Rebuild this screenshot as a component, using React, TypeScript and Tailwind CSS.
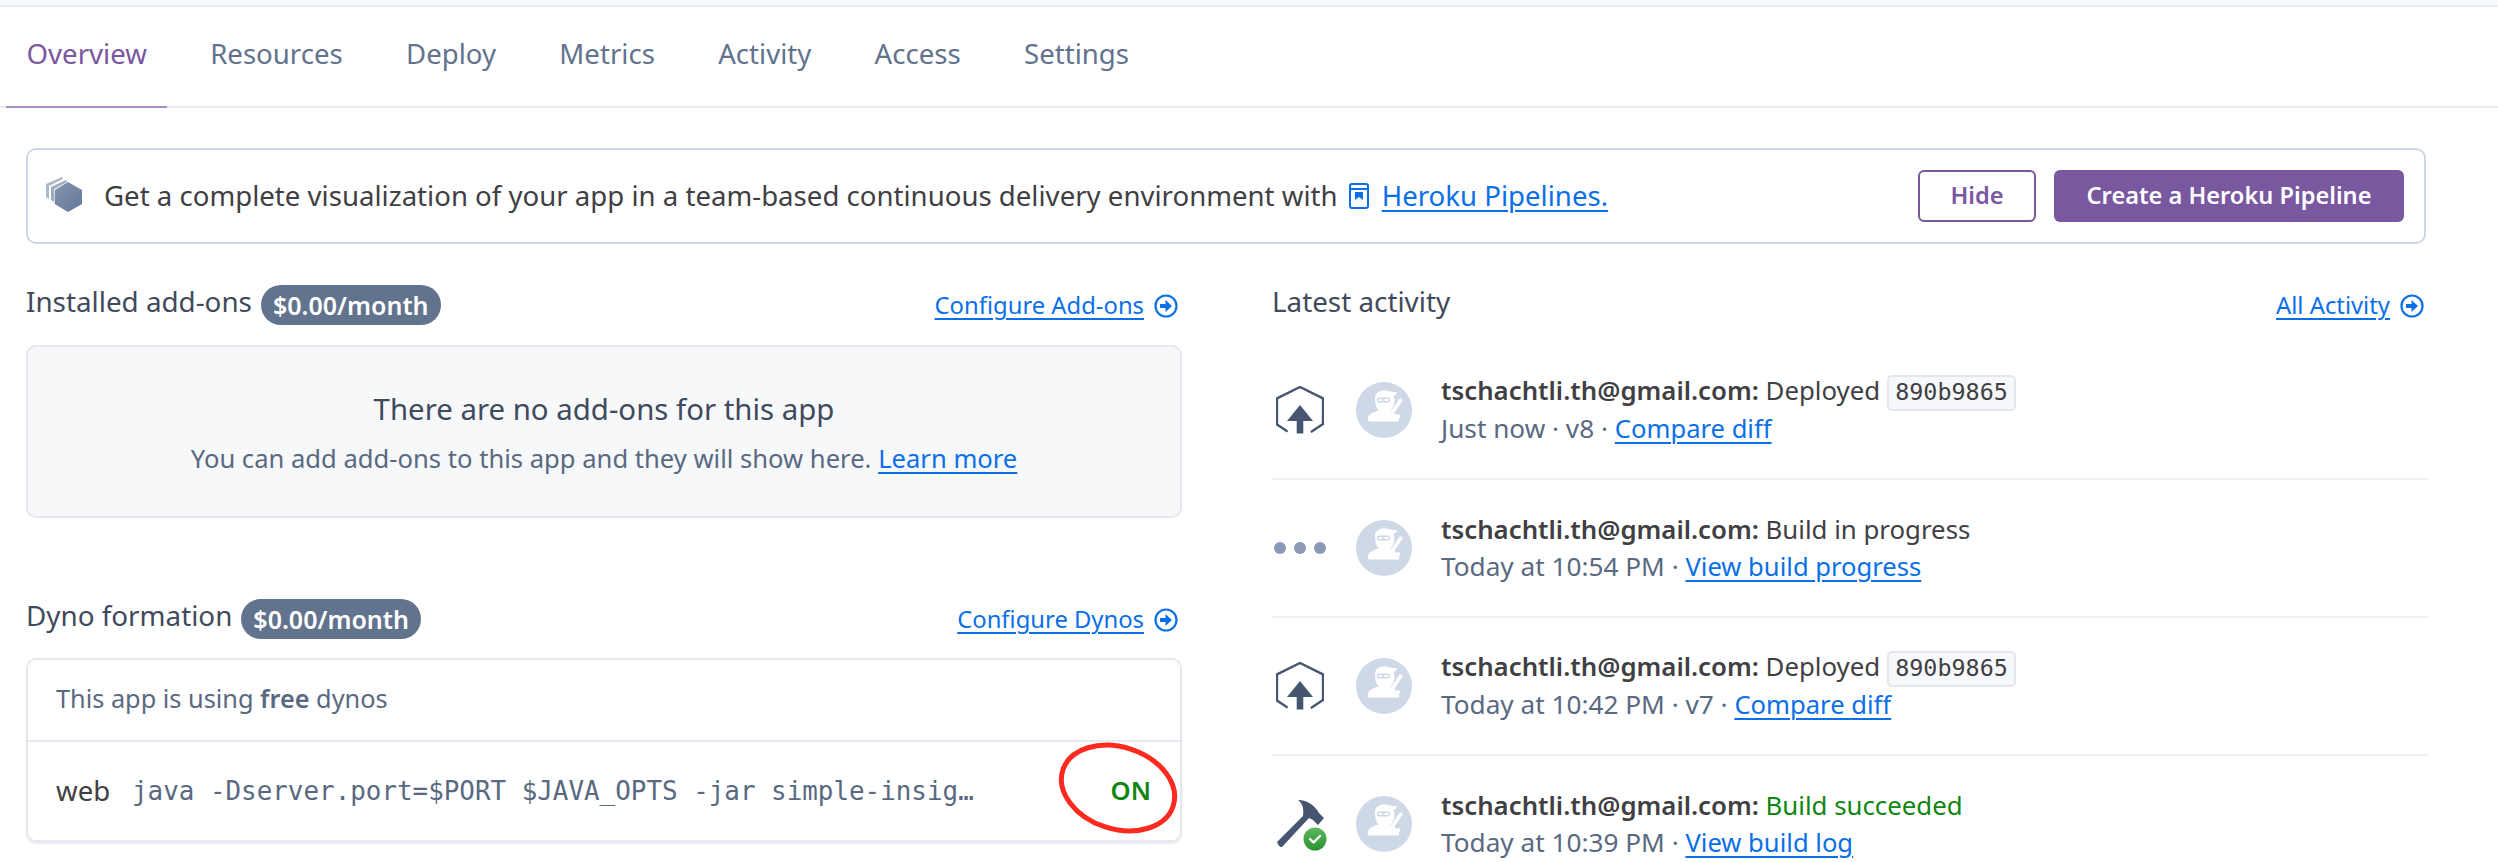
const tabs = ["Overview", "Resources", "Deploy", "Metrics", "Activity", "Access", "Settings"];

const sans = "font-['Noto_Sans','Open_Sans',sans-serif]";
const mono = "font-['DejaVu_Sans_Mono',monospace]";
const link = "text-[#0b6fe8] underline decoration-2 underline-offset-[4px]";

function ArrowCircle() {
  return (
    <svg viewBox="0 0 24 24" className="h-[24px] w-[24px] shrink-0" fill="none">
      <circle cx="12" cy="12" r="10.5" stroke="#0b6fe8" strokeWidth="2.2" />
      <path d="M6 10h5.500V6l6.500 6-6.500 6v-4H6z" fill="#0b6fe8" />
    </svg>
  );
}

function Ninja() {
  return (
    <svg viewBox="0 0 56 56" className="h-[56px] w-[56px] shrink-0">
      <circle cx="28" cy="28" r="28" fill="#cfd8e7" />
      <path d="M19 16c0-5 4-7.500 9-7.500 3 0 6 .5 8 1.500l5 0-1 3-2.500.5c1.500 3 1.500 8-.5 11.500-1 2-2 3.500-3 4.500 3 .5 5 1.500 6 3l4 0v3l-1 .5c0 1.500 0 3-.5 3.500H13c-1.500 0-1.500-2-1-3.500 1-4 5-6 10.500-7.500-2.500-3-3.500-7-3.500-12.500z" fill="#fff" />
      <path d="M34.500 30 44 16l3 2-9.500 14z" fill="#fff" />
      <rect x="21" y="15.500" width="13" height="5" rx="2" fill="#cfd8e7" />
      <rect x="22.500" y="17" width="4" height="2" fill="#fff" />
      <rect x="28.500" y="17" width="4" height="2" fill="#fff" />
    </svg>
  );
}

function DeployIcon() {
  return (
    <svg viewBox="0 0 48 48" className="ml-[2px] h-[48px] w-[48px]" fill="none">
      <path d="M10.700 45 1 38.500V12.300L24 1l23 11.300v25.700L35.700 45.500" stroke="#475670" strokeWidth="2.400" strokeLinecap="round" strokeLinejoin="round" />
      <path d="M24 19 37 35H27.300v12.500h-6.600V35H11z" fill="#475670" />
    </svg>
  );
}

function DotsIcon() {
  return (
    <svg viewBox="0 0 52 14" className="h-[14px] w-[52px]">
      <circle cx="6" cy="7" r="6" fill="#8b9ab5" />
      <circle cx="26" cy="7" r="6" fill="#8b9ab5" />
      <circle cx="46" cy="7" r="6" fill="#8b9ab5" />
    </svg>
  );
}

function BuildIcon() {
  return (
    <svg viewBox="0 0 52 54" className="ml-[2px] mt-[2px] h-[54px] w-[52px]">
      <defs>
        <linearGradient id="ok" x1="0" y1="0" x2="0" y2="1">
          <stop offset="0" stopColor="#5cb85c" />
          <stop offset="1" stopColor="#2a9232" />
        </linearGradient>
      </defs>
      <path d="M22 2c10 0 17 6 21 13l5 5-6 7-5-5-4-2L6 49c-2 .5-4-2-5-5l26-26c1-7 0-12-5-16z" fill="#475670" />
      <circle cx="39" cy="41" r="11.500" fill="url(#ok)" />
      <path d="m34 41 3.500 3.500 6.500-6.500" stroke="#fff" strokeWidth="2.400" fill="none" strokeLinecap="round" strokeLinejoin="round" />
    </svg>
  );
}

function Sha() {
  return (
    <code className={`${mono} ml-[7px] inline-block h-[36px] rounded-[5px] border-2 border-[#e3e6ec] bg-[#f7f8fb] px-[6px] align-middle text-[23.4px] leading-[31px] text-[#3f3f44]`}>
      890b9865
    </code>
  );
}

function ActivityRow({ icon, title, meta, action }: { icon: React.ReactNode; title: React.ReactNode; meta: string; action: string }) {
  return (
    <div className="flex h-[138px] items-center border-b-2 border-[#eef1f6]">
      <div className="flex w-[84px] shrink-0 items-center pl-[2px]">{icon}</div>
      <Ninja />
      <div className="ml-[29px] text-[25.8px]">
        <div className="flex h-[38px] items-center whitespace-nowrap text-[#3f3f44]">
          <span>
            <b className="font-semibold">tschachtli.th@gmail.com:</b> {title}
          </span>
        </div>
        <div className="flex h-[38px] items-center whitespace-pre text-[26.2px] text-[#596981]">
          {meta} <a className={`${link} text-[25.6px]`}>{action}</a>
        </div>
      </div>
    </div>
  );
}

function Heading({ title, price, action }: { title: string; price?: string; action: string }) {
  return (
    <div className="flex h-[40px] items-center justify-between">
      <div className="flex items-center gap-[9px]">
        <span className="pb-[6px] text-[27.8px] text-[#3f4a5c]">{title}</span>
        {price && <span className="rounded-full bg-[#62738d] px-[12px] text-[25px] leading-[40px] font-semibold text-white">{price}</span>}
      </div>
      <div className="flex items-center gap-[10px] pr-[4px] pt-[2px] text-[23.8px]">
        <a className={link}>{action}</a>
        <ArrowCircle />
      </div>
    </div>
  );
}

export default function App() {
  return (
    <div className={`${sans} relative h-[862px] w-[2498px] overflow-hidden bg-white text-[26px]`}>
      <div className="h-[7px] border-b-2 border-[#e9edf5] bg-[#f7f8fc]" />

      <nav className="flex h-[101px] gap-[22.300px] border-b-2 border-[#e9ebf3] pl-[6px]">
        {tabs.map((tab, i) => (
          <div
            key={tab}
            className={`-mb-[2px] flex w-fit items-center px-[20.500px] pb-[6px] text-[27.6px] ${
              i === 0 ? "border-b-2 border-[#a98fc4] text-[#79589f]" : "border-b-2 border-transparent text-[#62738d]"
            }`}
          >
            {tab}
          </div>
        ))}
      </nav>

      <div className="px-[26px] pr-[70px]">
        <div className="mr-[2px] mt-[40px] flex h-[96px] items-center rounded-[10px] border-2 border-[#cfd7e6] pl-[18px] pr-[20px] text-[27.6px]">
          <svg viewBox="0 0 36 35" className="mb-[4px] h-[35px] w-[36px] shrink-0">
            <defs>
              <linearGradient id="hex" x1="0" y1="0" x2="1" y2="1">
                <stop offset="0" stopColor="#8494ae" />
                <stop offset="1" stopColor="#64789a" />
              </linearGradient>
            </defs>
            <path d="M0 7 16 0l1 2L3 9v13l-3-2z" fill="#aeb9cb" />
            <path d="M5 10 20 3l1 2L8 12v13l-3-2z" fill="#9dabc1" />
            <path d="M22 5l14 8v14l-14 8-13.300-8V13z" fill="url(#hex)" />
          </svg>
          <span className="ml-[22px] whitespace-pre text-[#3f3f44]">
            Get a complete visualization of your app in a team-based continuous delivery environment with{" "}
          </span>
          <svg viewBox="0 0 20 26" className="ml-[3px] h-[26px] w-[22px] shrink-0" fill="none">
            <rect x="1" y="1" width="18" height="24" rx="2" stroke="#0b6fe8" strokeWidth="2" />
            <path d="M1 6h18" stroke="#0b6fe8" strokeWidth="2" />
            <path d="M6 9h8v8l-4-3-4 3z" fill="#0b6fe8" />
          </svg>
          <a className={`${link} ml-[12px]`}>Heroku Pipelines.</a>
          <button className="ml-auto h-[52px] w-[118px] rounded-[6px] border-2 border-[#79589f] text-[23.6px] font-semibold text-[#79589f]">Hide</button>
          <button className="ml-[18px] h-[52px] w-[350px] rounded-[6px] bg-[#79589f] text-[23.6px] font-semibold text-white">Create a Heroku Pipeline</button>
        </div>

        <div className="mt-[41px] grid grid-cols-[1156px_1156px] gap-x-[90px]">
          <div>
            <Heading title="Installed add-ons" price="$0.00/month" action="Configure Add-ons" />
            <div className="mt-[20px] flex h-[173px] flex-col items-center justify-center rounded-[10px] border-2 border-[#e6e8ed] bg-[#f7f8fa] pt-[5px] text-center">
              <div className="text-[29.4px] leading-[46px] text-[#3f4a5c]">There are no add-ons for this app</div>
              <div className="pt-[4px] text-[25.6px] leading-[46px] text-[#596981]">
                You can add add-ons to this app and they will show here. <a className={link}>Learn more</a>
              </div>
            </div>

            <div className="mt-[81px]">
              <Heading title="Dyno formation" price="$0.00/month" action="Configure Dynos" />
            </div>
            <div className="mt-[19px] rounded-[10px] border-2 border-[#e6e8ed] shadow-[0_2px_2px_rgba(80,100,130,0.12)]">
              <div className="flex h-[82px] items-center border-b-2 border-[#e6e9f1] pb-[2px] pl-[28px] text-[25.3px] text-[#596981]">
                <span>
                  This app is using <b className="font-semibold">free</b> dynos
                </span>
              </div>
              <div className="flex h-[98px] items-center pl-[28px] pr-[29px]">
                <span className="w-[76px] text-[27.6px] text-[#3f3f44]">web</span>
                <span className={`${mono} whitespace-pre text-[25.9px] text-[#596981]`}>java -Dserver.port=$PORT $JAVA_OPTS -jar simple-insig…</span>
                <span className="ml-auto text-[25.6px] font-semibold text-[#0f860f]">ON</span>
              </div>
            </div>
          </div>

          <div>
            <Heading title="Latest activity" action="All Activity" />
            <div className="mt-[17px]">
              <ActivityRow icon={<DeployIcon />} title={<>Deployed<Sha /></>} meta="Just now · v8 ·" action="Compare diff" />
              <ActivityRow icon={<DotsIcon />} title="Build in progress" meta="Today at 10:54 PM ·" action="View build progress" />
              <ActivityRow icon={<DeployIcon />} title={<>Deployed<Sha /></>} meta="Today at 10:42 PM · v7 ·" action="Compare diff" />
              <ActivityRow icon={<BuildIcon />} title={<span className="text-[#0f860f]">Build succeeded</span>} meta="Today at 10:39 PM ·" action="View build log" />
            </div>
          </div>
        </div>
      </div>

      {/* Hand-drawn annotation around the ON state */}
      <svg viewBox="0 0 124 96" className="absolute left-[1056px] top-[740px] h-[96px] w-[124px]" fill="none">
        <ellipse cx="62" cy="48" rx="58" ry="41" transform="rotate(18 62 48)" stroke="#ff2a1f" strokeWidth="5" />
      </svg>
    </div>
  );
}
